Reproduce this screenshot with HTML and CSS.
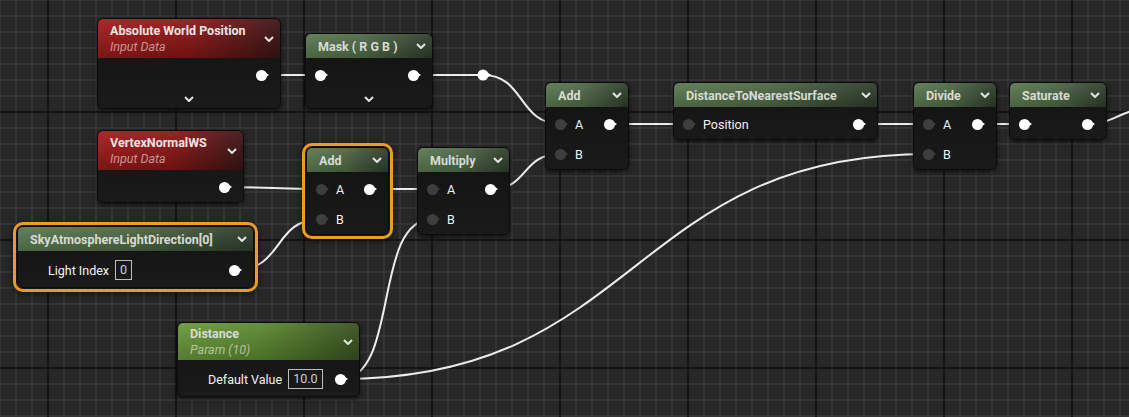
FILE: index.html
```html
<!DOCTYPE html>
<html lang="en">
<head>
    <meta charset="UTF-8">
    <title>Material Graph</title>
    <link rel="stylesheet" href="styles.css">
</head>
<body>
    <div class="graph">
        <!-- Wires sit under the nodes -->
        <svg class="wires" width="1129" height="417" viewBox="0 0 1129 417">
            <g fill="none" stroke="#ececec" stroke-width="2">
                <path d="M261.5 75H320.5"/>
                <path d="M413.5 75H483"/>
                <path d="M483 75C525 75 518 124 560.5 124"/>
                <path d="M224.5 187C270 187 276 189 321.5 189"/>
                <path d="M234.5 270C285 270 272 219 321.5 219"/>
                <path d="M369.5 189H432.5"/>
                <path d="M490.5 189C530 189 520 154 560.5 154"/>
                <path d="M609.5 124H688.5"/>
                <path d="M858.5 124H928.5"/>
                <path d="M977.5 124H1024.5"/>
                <path d="M1087.5 124C1108 124 1114 116 1135 110"/>
                <path d="M340.5 379C400 379 372 219 432.5 219"/>
                <path d="M340.5 379C640 379 630 154 928.5 154"/>
            </g>
            <circle cx="483" cy="75" r="5.5" fill="#fff"/>
            <polygon points="487.5,72.5 491,75 487.5,77.5" fill="#fff"/>
        </svg>

        <div class="node n-awp">
            <div class="node-head head-red tall">
                <div class="head-text">
                    <div class="node-title">Absolute World Position</div>
                    <div class="node-sub">Input Data</div>
                </div>
                <svg class="chev" viewBox="0 0 10 6"><polyline points="1,1 5,5 9,1"/></svg>
            </div>
            <div class="node-body">
                <div class="pin-row"><span class="pin out"></span></div>
                <div class="expand"><svg class="chev" viewBox="0 0 10 6"><polyline points="1,1 5,5 9,1"/></svg></div>
            </div>
        </div>

        <div class="node n-mask">
            <div class="node-head head-green">
                <div class="node-title">Mask ( R G B )</div>
                <svg class="chev" viewBox="0 0 10 6"><polyline points="1,1 5,5 9,1"/></svg>
            </div>
            <div class="node-body">
                <div class="pin-row"><span class="pin in lit"></span><span class="pin out"></span></div>
                <div class="expand"><svg class="chev" viewBox="0 0 10 6"><polyline points="1,1 5,5 9,1"/></svg></div>
            </div>
        </div>

        <div class="node n-vnws">
            <div class="node-head head-red tall">
                <div class="head-text">
                    <div class="node-title">VertexNormalWS</div>
                    <div class="node-sub">Input Data</div>
                </div>
                <svg class="chev" viewBox="0 0 10 6"><polyline points="1,1 5,5 9,1"/></svg>
            </div>
            <div class="node-body">
                <div class="pin-row"><span class="pin out"></span></div>
            </div>
        </div>

        <div class="node n-add1 selected">
            <div class="node-head head-green">
                <div class="node-title">Add</div>
                <svg class="chev" viewBox="0 0 10 6"><polyline points="1,1 5,5 9,1"/></svg>
            </div>
            <div class="node-body">
                <div class="pin-row"><span class="pin in"></span><span class="pin-label">A</span><span class="pin out"></span></div>
                <div class="pin-row"><span class="pin in"></span><span class="pin-label">B</span></div>
            </div>
        </div>

        <div class="node n-sky selected">
            <div class="node-head head-green">
                <div class="node-title">SkyAtmosphereLightDirection[0]</div>
                <svg class="chev" viewBox="0 0 10 6"><polyline points="1,1 5,5 9,1"/></svg>
            </div>
            <div class="node-body">
                <div class="pin-row param">
                    <span class="pin-label">Light Index</span>
                    <span class="value">0</span>
                    <span class="pin out"></span>
                </div>
            </div>
        </div>

        <div class="node n-mult">
            <div class="node-head head-green">
                <div class="node-title">Multiply</div>
                <svg class="chev" viewBox="0 0 10 6"><polyline points="1,1 5,5 9,1"/></svg>
            </div>
            <div class="node-body">
                <div class="pin-row"><span class="pin in"></span><span class="pin-label">A</span><span class="pin out"></span></div>
                <div class="pin-row"><span class="pin in"></span><span class="pin-label">B</span></div>
            </div>
        </div>

        <div class="node n-add2">
            <div class="node-head head-green">
                <div class="node-title">Add</div>
                <svg class="chev" viewBox="0 0 10 6"><polyline points="1,1 5,5 9,1"/></svg>
            </div>
            <div class="node-body">
                <div class="pin-row"><span class="pin in"></span><span class="pin-label">A</span><span class="pin out"></span></div>
                <div class="pin-row"><span class="pin in"></span><span class="pin-label">B</span></div>
            </div>
        </div>

        <div class="node n-dtns">
            <div class="node-head head-green">
                <div class="node-title">DistanceToNearestSurface</div>
                <svg class="chev" viewBox="0 0 10 6"><polyline points="1,1 5,5 9,1"/></svg>
            </div>
            <div class="node-body">
                <div class="pin-row"><span class="pin in"></span><span class="pin-label">Position</span><span class="pin out"></span></div>
            </div>
        </div>

        <div class="node n-div">
            <div class="node-head head-green">
                <div class="node-title">Divide</div>
                <svg class="chev" viewBox="0 0 10 6"><polyline points="1,1 5,5 9,1"/></svg>
            </div>
            <div class="node-body">
                <div class="pin-row"><span class="pin in"></span><span class="pin-label">A</span><span class="pin out"></span></div>
                <div class="pin-row"><span class="pin in"></span><span class="pin-label">B</span></div>
            </div>
        </div>

        <div class="node n-sat">
            <div class="node-head head-green">
                <div class="node-title">Saturate</div>
                <svg class="chev" viewBox="0 0 10 6"><polyline points="1,1 5,5 9,1"/></svg>
            </div>
            <div class="node-body">
                <div class="pin-row"><span class="pin in lit"></span><span class="pin out"></span></div>
            </div>
        </div>

        <div class="node n-dist">
            <div class="node-head head-param tall">
                <div class="head-text">
                    <div class="node-title">Distance</div>
                    <div class="node-sub">Param (10)</div>
                </div>
                <svg class="chev" viewBox="0 0 10 6"><polyline points="1,1 5,5 9,1"/></svg>
            </div>
            <div class="node-body">
                <div class="pin-row param">
                    <span class="pin-label">Default Value</span>
                    <span class="value">10.0</span>
                    <span class="pin out"></span>
                </div>
            </div>
        </div>
    </div>
</body>
</html>
```

FILE: styles.css
```css
body {
    margin: 0;
    background: #272727;
    font-family: Roboto, "Noto Sans", sans-serif;
    overflow: hidden;
}

/* Canvas with minor (16px) and major (128px) grid lines */
.graph {
    position: relative;
    width: 1129px;
    height: 417px;
    background-color: #272727;
    background-image:
        linear-gradient(to right, #141414 2px, transparent 2px),
        linear-gradient(to bottom, #141414 2px, transparent 2px),
        linear-gradient(to right, #353535 2px, transparent 2px),
        linear-gradient(to bottom, #353535 2px, transparent 2px);
    background-size: 128px 128px, 128px 128px, 16px 16px, 16px 16px;
    background-position: 47px 111px, 47px 111px, -1px -1px, -1px -1px;
}

.wires {
    position: absolute;
    left: 0;
    top: 0;
}

/* Nodes */
.node {
    position: absolute;
    box-sizing: border-box;
    border: 1px solid #0b0b0b;
    border-radius: 6px;
    background: linear-gradient(#121212, #1a1a1a);
    box-shadow: 0 2px 5px rgba(0, 0, 0, 0.6);
    overflow: hidden;
}

.node.selected {
    overflow: visible;
    box-shadow: 0 0 0 1px #161616, 0 0 0 4px #eb9c24, 0 2px 6px 4px rgba(0, 0, 0, 0.5);
}

.node.selected .node-head {
    border-radius: 5px 5px 0 0;
}

.n-awp  { left: 97px;   top: 18px;  width: 184px; }
.n-mask { left: 305px;  top: 33px;  width: 128px; }
.n-vnws { left: 97px;   top: 130px; width: 147px; }
.n-add1 { left: 306px;  top: 147px; width: 83px; }
.n-sky  { left: 17px;   top: 226px; width: 237px; }
.n-mult { left: 417px;  top: 147px; width: 93px; }
.n-add2 { left: 545px;  top: 82px;  width: 84px; }
.n-dtns { left: 673px;  top: 82px;  width: 205px; }
.n-div  { left: 913px;  top: 82px;  width: 84px; }
.n-sat  { left: 1009px; top: 82px;  width: 98px; }
.n-dist { left: 177px;  top: 322px; width: 183px; }

.node-head {
    display: flex;
    align-items: center;
    justify-content: space-between;
    height: 24px;
    padding: 0 6px 0 12px;
}

.node-head.tall {
    height: 39px;
}

.n-dist .node-head.tall {
    height: 37px;
}

.head-green {
    background:
        linear-gradient(rgba(255, 255, 255, 0.08), rgba(0, 0, 0, 0.15)),
        linear-gradient(to right, #58764e 0%, #4c6644 45%, #2c3a29 100%);
}

.head-red {
    background:
        linear-gradient(rgba(255, 255, 255, 0.06), rgba(0, 0, 0, 0.25)),
        linear-gradient(to right, #a81b1b 0%, #931717 50%, #3c1515 100%);
}

.head-param {
    background:
        linear-gradient(rgba(255, 255, 255, 0.06), rgba(0, 0, 0, 0.2)),
        linear-gradient(to right, #6a9a3a 0%, #5c8a30 45%, #38521f 100%);
}

.head-text {
    display: flex;
    flex-direction: column;
    gap: 1px;
}

.node-title {
    font-size: 12.5px;
    font-weight: 700;
    color: #d6dbd3;
    white-space: nowrap;
}

.head-red .node-title {
    color: #f0e4e4;
}

.node-sub {
    font-size: 12.5px;
    font-style: italic;
    color: rgba(255, 255, 255, 0.55);
}

.chev {
    width: 10px;
    height: 6px;
    flex-shrink: 0;
    fill: none;
    stroke: #e4e4e4;
    stroke-width: 2;
}

.node-body {
    padding-top: 2px;
}

.pin-row {
    display: flex;
    align-items: center;
    height: 30px;
    padding: 0 13px 0 9px;
}

.pin-row.param {
    height: 34px;
    padding-left: 30px;
}

.pin-label {
    margin-left: 9px;
    font-size: 12.5px;
    color: #f2f2f2;
}

.param .pin-label {
    margin-left: 0;
}

.value {
    margin-left: 6px;
    padding: 0 4px;
    height: 18px;
    line-height: 18px;
    border: 1px solid #bdbdbd;
    font-size: 12.5px;
    color: #cfcfcf;
}

/* Pins: circle with a small arrow to the right */
.pin {
    position: relative;
    width: 11px;
    height: 11px;
    border-radius: 50%;
    background: #3e3e3e;
    flex-shrink: 0;
}

.pin::after {
    content: '';
    position: absolute;
    left: 10px;
    top: 3px;
    border-left: 3px solid #3e3e3e;
    border-top: 2.5px solid transparent;
    border-bottom: 2.5px solid transparent;
}

.pin.out,
.pin.lit {
    background: #fff;
}

.pin.out::after,
.pin.lit::after {
    border-left-color: #fff;
}

.pin.out {
    margin-left: auto;
}

.expand {
    display: flex;
    justify-content: center;
    align-items: center;
    height: 18px;
}
```
